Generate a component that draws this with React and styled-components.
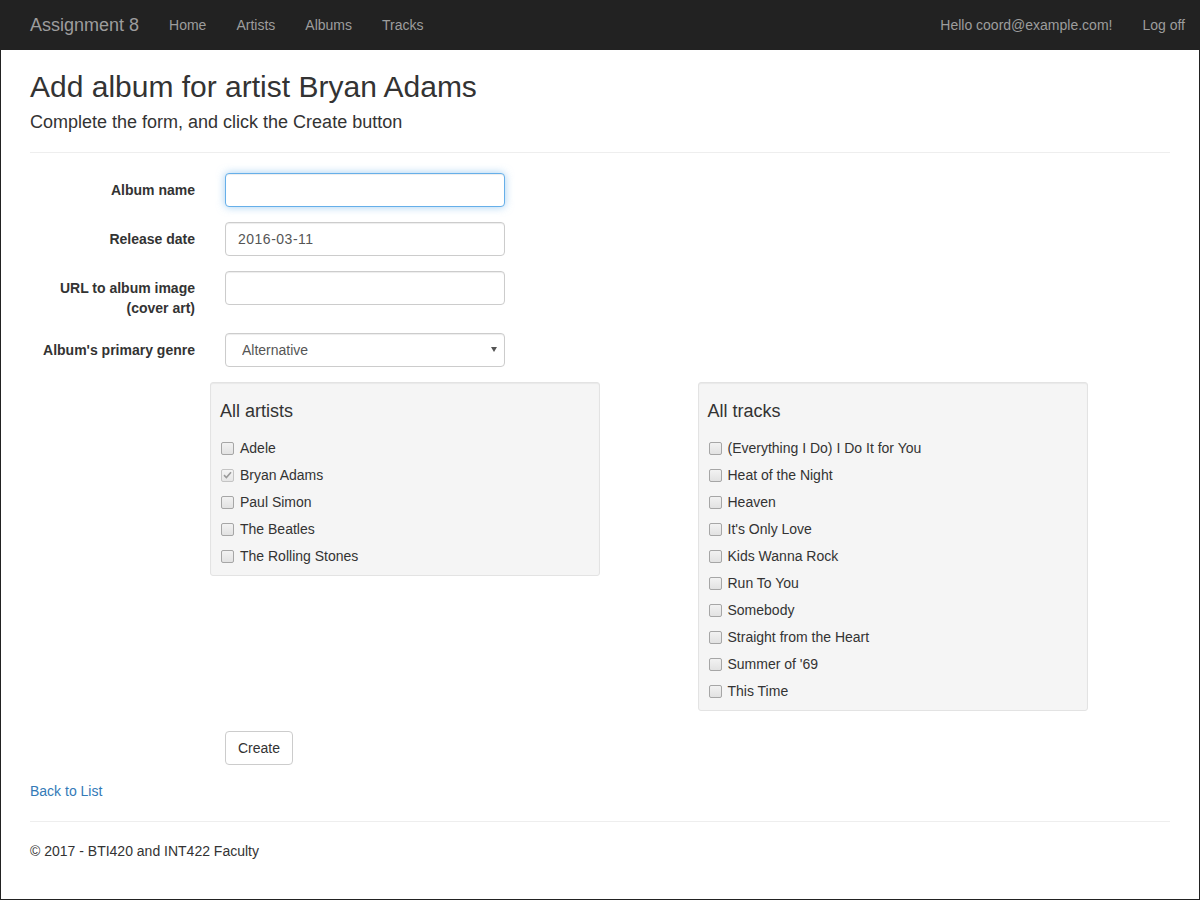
import styled, { createGlobalStyle } from "styled-components";

const GlobalStyle = createGlobalStyle`
    html, body {
        margin: 0;
        padding: 0;
        background: #fff;
    }
    body {
        font-family: "Liberation Sans", Arial, sans-serif;
        font-size: 14px;
        line-height: 1.42857;
        color: #333;
    }
    * {
        box-sizing: border-box;
    }
`

const Page = styled.div`
    display: flex;
    flex-direction: column;
    min-height: 900px;
    border: 1px solid #222;
    border-top: 0;
`

const Navbar = styled.nav`
    display: flex;
    align-items: center;
    height: 50px;
    background-color: #222;
    padding: 0 0 0 14px;
`

const Brand = styled.a`
    display: block;
    padding: 15px;
    font-size: 18px;
    line-height: 20px;
    color: #9d9d9d;
    text-decoration: none;
`

const NavList = styled.ul`
    display: flex;
    list-style: none;
    margin: 0;
    padding: 0;
    margin-left: ${props => props.$right ? "auto" : "0"};
    margin-right: ${props => props.$right ? "-1px" : "0"};
`

const NavLink = styled.a`
    display: block;
    padding: 15px;
    line-height: 20px;
    font-size: 14px;
    color: #9d9d9d;
    text-decoration: none;
`

const Container = styled.main`
    padding: 0 29px;
`

const Title = styled.h2`
    margin: 20px 0 10px 0;
    font-size: 30px;
    font-weight: 500;
    line-height: 1.1;
`

const Subtitle = styled.h4`
    margin: 10px 0;
    font-size: 18px;
    font-weight: 500;
    line-height: 19px;
`

const Rule = styled.hr`
    margin: 20px 0;
    border: 0;
    border-top: 1px solid #eee;
`

const FormGroup = styled.div`
    display: grid;
    grid-template-columns: 165px 1fr;
    column-gap: 30px;
    margin-bottom: 15px;
`

const Label = styled.label`
    padding-top: 7px;
    text-align: right;
    font-weight: bold;
    line-height: 20px;
`

const Input = styled.input`
    display: block;
    width: 280px;
    height: 34px;
    padding: 6px 12px;
    font-family: inherit;
    font-size: 14px;
    line-height: 20px;
    color: #555;
    background: #fff;
    border: 1px solid ${props => props.$focus ? "#66afe9" : "#ccc"};
    border-radius: 4px;
    letter-spacing: ${props => props.$spaced ? "0.5px" : "normal"};
    box-shadow: ${props => props.$focus
        ? "inset 0 1px 1px rgba(0,0,0,.075), 0 0 8px rgba(102,175,233,.6)"
        : "inset 0 1px 1px rgba(0,0,0,.075)"};
    outline: none;
`

const SelectWrap = styled.span`
    position: relative;
    display: block;
    width: 280px;

    &::after {
        content: "";
        position: absolute;
        right: 8px;
        top: 14px;
        border-left: 3px solid transparent;
        border-right: 3px solid transparent;
        border-top: 5px solid #555;
        pointer-events: none;
    }
`

const Select = styled.select`
    appearance: none;
    display: block;
    width: 100%;
    height: 34px;
    padding: 6px 12px 6px 16px;
    font-family: inherit;
    font-size: 14px;
    color: #555;
    background: #fff;
    border: 1px solid #ccc;
    border-radius: 4px;
    box-shadow: inset 0 1px 1px rgba(0,0,0,.075);
    outline: none;
`

const WellRow = styled.div`
    display: flex;
    align-items: flex-start;
    gap: 97.5px;
    padding-left: 180px;
    margin-bottom: 20px;
`

const Well = styled.div`
    width: 390px;
    padding: 9px;
    background-color: #f5f5f5;
    border: 1px solid #e3e3e3;
    border-radius: 3px;
    box-shadow: inset 0 1px 1px rgba(0,0,0,.05);
`

const WellTitle = styled.h4`
    margin: 10px 0;
    font-size: 18px;
    font-weight: 500;
    line-height: 1.1;
`

const CheckList = styled.div`
    display: flex;
    flex-direction: column;
    gap: 7px;
    padding-top: 6px;
`

const CheckItem = styled.label`
    display: flex;
    align-items: center;
    line-height: 20px;
    height: 20px;
`

const Box = styled.span`
    display: flex;
    align-items: center;
    justify-content: center;
    width: 13px;
    height: 13px;
    margin: 1px 6px 0 1px;
    border: 1px solid ${props => props.$checked ? "#c4c4c4" : "#a6a6a6"};
    border-radius: 2px;
    background: ${props => props.$checked
        ? "linear-gradient(#f4f4f4, #e6e6e6)"
        : "linear-gradient(#f2f2f2, #e2e2e2)"};
`

const Button = styled.button`
    display: inline-block;
    padding: 6px 12px;
    font-family: inherit;
    font-size: 14px;
    line-height: 20px;
    color: #333;
    background: #fff;
    border: 1px solid #ccc;
    border-radius: 4px;
`

const ButtonRow = styled.div`
    padding-left: 195px;
    margin-bottom: 16px;
`

const BackLink = styled.a`
    display: block;
    color: #337ab7;
    text-decoration: none;
    line-height: 20px;
`

const FooterText = styled.p`
    margin: 0 0 10px 0;
`

const artists = [
    { name: "Adele" },
    { name: "Bryan Adams", checked: true },
    { name: "Paul Simon" },
    { name: "The Beatles" },
    { name: "The Rolling Stones" },
]

const tracks = [
    "(Everything I Do) I Do It for You",
    "Heat of the Night",
    "Heaven",
    "It's Only Love",
    "Kids Wanna Rock",
    "Run To You",
    "Somebody",
    "Straight from the Heart",
    "Summer of '69",
    "This Time",
]

function Check({ label, checked }) {
    return (
        <CheckItem>
            <Box $checked={checked}>
                {checked && (
                    <svg width="9" height="8" viewBox="0 0 9 8">
                        <path d="M1 4.2 L3.4 6.5 L8 1.2" fill="none" stroke="#9a9a9a" strokeWidth="1.6" />
                    </svg>
                )}
            </Box>
            {label}
        </CheckItem>
    )
}

export default function App() {
    return (
        <Page>
            <GlobalStyle />
            <Navbar>
                <Brand href="#">Assignment 8</Brand>
                <NavList>
                    <li><NavLink href="#">Home</NavLink></li>
                    <li><NavLink href="#">Artists</NavLink></li>
                    <li><NavLink href="#">Albums</NavLink></li>
                    <li><NavLink href="#">Tracks</NavLink></li>
                </NavList>
                <NavList $right>
                    <li><NavLink href="#">Hello coord@example.com!</NavLink></li>
                    <li><NavLink href="#">Log off</NavLink></li>
                </NavList>
            </Navbar>
            <Container>
                <Title>Add album for artist Bryan Adams</Title>
                <Subtitle>Complete the form, and click the Create button</Subtitle>
                <Rule />

                <FormGroup>
                    <Label>Album name</Label>
                    <div><Input $focus defaultValue="" /></div>
                </FormGroup>
                <FormGroup>
                    <Label>Release date</Label>
                    <div><Input $spaced defaultValue="2016-03-11" /></div>
                </FormGroup>
                <FormGroup>
                    <Label>URL to album image<br />(cover art)</Label>
                    <div><Input defaultValue="" /></div>
                </FormGroup>
                <FormGroup>
                    <Label>Album's primary genre</Label>
                    <div>
                        <SelectWrap>
                            <Select defaultValue="Alternative">
                                <option>Alternative</option>
                                <option>Rock</option>
                                <option>Pop</option>
                            </Select>
                        </SelectWrap>
                    </div>
                </FormGroup>

                <WellRow>
                    <Well>
                        <WellTitle>All artists</WellTitle>
                        <CheckList>
                            {artists.map(a => <Check key={a.name} label={a.name} checked={a.checked} />)}
                        </CheckList>
                    </Well>
                    <Well>
                        <WellTitle>All tracks</WellTitle>
                        <CheckList>
                            {tracks.map(t => <Check key={t} label={t} />)}
                        </CheckList>
                    </Well>
                </WellRow>

                <ButtonRow>
                    <Button>Create</Button>
                </ButtonRow>

                <BackLink href="#">Back to List</BackLink>

                <Rule />
                <footer>
                    <FooterText>© 2017 - BTI420 and INT422 Faculty</FooterText>
                </footer>
            </Container>
        </Page>
    )
}
